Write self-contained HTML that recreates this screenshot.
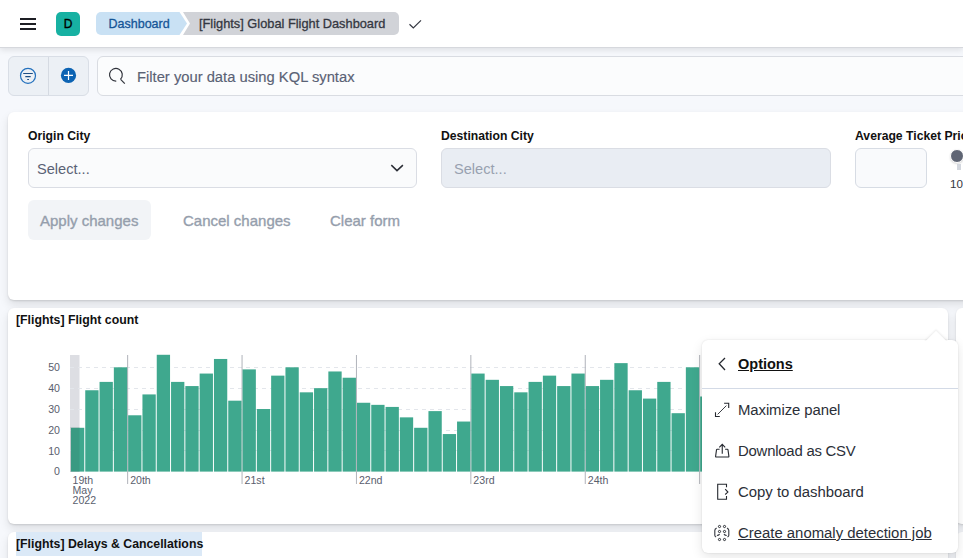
<!DOCTYPE html>
<html><head><meta charset="utf-8">
<style>
*{box-sizing:border-box;margin:0;padding:0}
html,body{width:963px;height:558px;overflow:hidden;background:#f6f8fc;font-family:"Liberation Sans",sans-serif;color:#1d2a3e}
.abs{position:absolute}
#hdr{position:absolute;left:0;top:0;width:963px;height:48px;background:#fff;border-bottom:1px solid #d6d8dd;box-shadow:0 2px 6px rgba(0,0,0,.1)}
.ham{position:absolute;left:20px;width:16px;height:2px;background:#1d1e24}
#avatar{position:absolute;left:56px;top:12px;width:24px;height:24px;border-radius:5px;background:#17b1a2;color:#000;font-size:12px;line-height:24px;text-align:center;-webkit-text-stroke:.35px #000}
.bc{position:absolute;top:12px;height:23px;font-size:12.5px;line-height:24px;white-space:nowrap}
#bc1{left:96px;width:91px;color:#155597;background:#c9e1f4;clip-path:polygon(0 0,83.5px 0,91px 50%,83.5px 100%,0 100%);border-radius:5px 0 0 5px;padding-left:12.5px;-webkit-text-stroke:.3px #155597}
#bc2{left:183px;width:216px;color:#343741;background:#d1d3d8;clip-path:polygon(0 0,100% 0,100% 100%,0 100%,7px 50%);border-radius:0 5px 5px 0;padding-left:16px;font-size:12.8px;-webkit-text-stroke:.3px #343741}
.panel{position:absolute;background:#fff;border-radius:6px;box-shadow:0 1px 2px rgba(0,0,0,.12),0 5px 10px rgba(0,0,0,.1)}
.lbl{position:absolute;font-size:12.2px;font-weight:bold;color:#111;white-space:nowrap}
.sel{position:absolute;height:40px;border:1px solid #dadde4;border-radius:6px;background:#fafbfc;font-size:14.6px;color:#5a6275;line-height:40px;padding-left:8px}
.btxt{position:absolute;font-size:15px;color:#959eac;white-space:nowrap;-webkit-text-stroke:.35px #959eac}
.mi{position:absolute;left:738px;font-size:14.9px;color:#2b2f38;white-space:nowrap}
.axl{font-family:"Liberation Sans",sans-serif;font-size:10.6px;fill:#5a606e}
svg.ic path,svg.ic circle{vector-effect:none}
</style></head><body>
<div id="hdr">
  <div class="ham" style="top:18px"></div>
  <div class="ham" style="top:23px"></div>
  <div class="ham" style="top:28px"></div>
  <div id="avatar">D</div>
  <div class="bc" id="bc1">Dashboard</div>
  <div class="bc" id="bc2">[Flights] Global Flight Dashboard</div>
  <svg class="abs" style="left:406px;top:16px" width="18" height="16" viewBox="0 0 18 16"><path d="M3.5 8.3 L7.3 12 L15 4.3" fill="none" stroke="#343741" stroke-width="1.2"/></svg>
</div>

<!-- filter bar -->
<div class="abs" style="left:8px;top:56px;width:81px;height:40px;background:#ecf0f5;border:1px solid #d9dee6;border-radius:6px"></div>
<div class="abs" style="left:48px;top:57px;width:1px;height:38px;background:#d5dae2"></div>
<svg class="abs" style="left:14px;top:61px" width="30" height="30" viewBox="0 0 30 30"><circle cx="14" cy="14.8" r="7.5" fill="none" stroke="#2471bd" stroke-width="1.2"/><path d="M9.2 12.5h9.6M11.3 15.6h5.4M13.2 18.5h1.8" stroke="#1f4f85" stroke-width="1.2"/></svg>
<svg class="abs" style="left:54px;top:61px" width="30" height="30" viewBox="0 0 30 30"><circle cx="14.5" cy="14.4" r="7.6" fill="#0c63b3"/><path d="M14.5 9.9v9M10 14.4h9" stroke="#fff" stroke-width="1.2"/></svg>
<div class="abs" style="left:97px;top:56px;width:880px;height:40px;background:#fbfcfd;border:1px solid #d9dce2;border-radius:6px"></div>
<svg class="abs" style="left:102px;top:61px" width="30" height="30" viewBox="0 0 30 30"><path d="M14.24 20.19A6.4 6.4 0 1 1 18.5 18.25" fill="none" stroke="#30333b" stroke-width="1.2"/><path d="M18.6 18.4L22.8 22.6" stroke="#30333b" stroke-width="1.2"/></svg>
<div class="abs" style="left:137px;top:68.5px;font-size:14.75px;color:#5a6275;white-space:nowrap;-webkit-text-stroke:.15px #5a6275">Filter your data using KQL syntax</div>

<!-- controls panel -->
<div class="panel" style="left:8px;top:112px;width:990px;height:188px"></div>
<div class="lbl" style="left:28px;top:129px">Origin City</div>
<div class="sel" style="left:28px;top:148px;width:389px">Select...</div>
<svg class="abs" style="left:388px;top:160px" width="18" height="16" viewBox="0 0 18 16"><path d="M3.3 5.1L9 10.6 14.9 5.1" fill="none" stroke="#2b2e36" stroke-width="1.5"/></svg>
<div class="lbl" style="left:441px;top:129px">Destination City</div>
<div class="sel" style="left:441px;top:148px;width:390px;background:#e9edf3;color:#98a1b0;padding-left:12px">Select...</div>
<div class="lbl" style="left:855px;top:129px">Average Ticket Price</div>
<div class="abs" style="left:855px;top:148px;width:72px;height:40px;border:1px solid #d7dce4;border-radius:6px;background:#f9fafc"></div>
<div class="abs" style="left:950px;top:149px;width:14px;height:14px;border-radius:50%;background:#5f6574;border:1px solid #fff;box-shadow:0 1px 2px rgba(0,0,0,.15)"></div>
<div class="abs" style="left:957px;top:164px;width:4px;height:6px;background:#d3d7de"></div>
<div class="abs" style="left:950px;top:176.5px;font-size:11.6px;color:#343741">10</div>
<div class="abs" style="left:28px;top:200px;width:123px;height:40px;background:#f2f4f7;border-radius:6px"></div>
<div class="btxt" style="left:40px;top:211.5px">Apply changes</div>
<div class="btxt" style="left:183px;top:211.5px">Cancel changes</div>
<div class="btxt" style="left:330px;top:211.5px">Clear form</div>

<!-- flight count panel -->
<div class="panel" style="left:8px;top:308px;width:940px;height:216px"></div>
<div class="panel" style="left:956px;top:308px;width:40px;height:216px"></div>
<div class="lbl" style="left:16px;top:313px;font-size:12.3px">[Flights] Flight count</div>
<svg class="abs" style="left:0;top:0" width="963" height="558">
  <rect x="70" y="355" width="9.5" height="117" fill="#dddee3"/>
  <g stroke="#e3e6eb" stroke-width="1" stroke-dasharray="4 4">
    <line x1="70" y1="367.5" x2="948" y2="367.5"/>
    <line x1="70" y1="388.5" x2="948" y2="388.5"/>
    <line x1="70" y1="409.5" x2="948" y2="409.5"/>
    <line x1="70" y1="430.5" x2="948" y2="430.5"/>
    <line x1="70" y1="450.5" x2="948" y2="450.5"/>
  </g>
  <g stroke="#b0b3ba" stroke-width="1">
    <line x1="127.65" y1="355" x2="127.65" y2="484"/>
    <line x1="242.05" y1="355" x2="242.05" y2="484"/>
    <line x1="356.45" y1="355" x2="356.45" y2="484"/>
    <line x1="470.85" y1="355" x2="470.85" y2="484"/>
    <line x1="585.25" y1="355" x2="585.25" y2="484"/>
    <line x1="699.65" y1="355" x2="699.65" y2="484"/>
  </g>
  <g fill="#3fa88e">
<rect x="70.95" y="427.79" width="13.30" height="43.81"/>
<rect x="85.25" y="390.25" width="13.30" height="81.35"/>
<rect x="99.55" y="381.90" width="13.30" height="89.70"/>
<rect x="113.85" y="367.30" width="13.30" height="104.30"/>
<rect x="128.15" y="415.28" width="13.30" height="56.32"/>
<rect x="142.45" y="394.42" width="13.30" height="77.18"/>
<rect x="156.75" y="354.78" width="13.30" height="116.82"/>
<rect x="171.05" y="381.90" width="13.30" height="89.70"/>
<rect x="185.35" y="386.07" width="13.30" height="85.53"/>
<rect x="199.65" y="373.56" width="13.30" height="98.04"/>
<rect x="213.95" y="358.96" width="13.30" height="112.64"/>
<rect x="228.25" y="400.68" width="13.30" height="70.92"/>
<rect x="242.55" y="369.39" width="13.30" height="102.21"/>
<rect x="256.85" y="409.02" width="13.30" height="62.58"/>
<rect x="271.15" y="375.64" width="13.30" height="95.96"/>
<rect x="285.45" y="367.30" width="13.30" height="104.30"/>
<rect x="299.75" y="392.33" width="13.30" height="79.27"/>
<rect x="314.05" y="388.16" width="13.30" height="83.44"/>
<rect x="328.35" y="371.47" width="13.30" height="100.13"/>
<rect x="342.65" y="377.73" width="13.30" height="93.87"/>
<rect x="356.95" y="402.76" width="13.30" height="68.84"/>
<rect x="371.25" y="404.85" width="13.30" height="66.75"/>
<rect x="385.55" y="406.93" width="13.30" height="64.67"/>
<rect x="399.85" y="417.36" width="13.30" height="54.24"/>
<rect x="414.15" y="427.79" width="13.30" height="43.81"/>
<rect x="428.45" y="411.11" width="13.30" height="60.49"/>
<rect x="442.75" y="434.05" width="13.30" height="37.55"/>
<rect x="457.05" y="421.54" width="13.30" height="50.06"/>
<rect x="471.35" y="373.56" width="13.30" height="98.04"/>
<rect x="485.65" y="379.82" width="13.30" height="91.78"/>
<rect x="499.95" y="386.07" width="13.30" height="85.53"/>
<rect x="514.25" y="392.33" width="13.30" height="79.27"/>
<rect x="528.55" y="381.90" width="13.30" height="89.70"/>
<rect x="542.85" y="375.64" width="13.30" height="95.96"/>
<rect x="557.15" y="386.07" width="13.30" height="85.53"/>
<rect x="571.45" y="373.56" width="13.30" height="98.04"/>
<rect x="585.75" y="386.07" width="13.30" height="85.53"/>
<rect x="600.05" y="379.82" width="13.30" height="91.78"/>
<rect x="614.35" y="363.13" width="13.30" height="108.47"/>
<rect x="628.65" y="390.25" width="13.30" height="81.35"/>
<rect x="642.95" y="398.59" width="13.30" height="73.01"/>
<rect x="657.25" y="381.90" width="13.30" height="89.70"/>
<rect x="671.55" y="413.19" width="13.30" height="58.41"/>
<rect x="685.85" y="367.30" width="13.30" height="104.30"/>
<rect x="700.15" y="396.50" width="13.30" height="75.10"/>
<rect x="714.45" y="388.16" width="13.30" height="83.44"/>
<rect x="728.75" y="377.73" width="13.30" height="93.87"/>
<rect x="743.05" y="392.33" width="13.30" height="79.27"/>
<rect x="757.35" y="383.99" width="13.30" height="87.61"/>
<rect x="771.65" y="379.82" width="13.30" height="91.78"/>
<rect x="785.95" y="388.16" width="13.30" height="83.44"/>
<rect x="800.25" y="375.64" width="13.30" height="95.96"/>
  </g>
  <rect x="70" y="427" width="9.5" height="45" fill="#000" opacity="0.08"/>
  <g class="axl" text-anchor="end">
    <text x="60" y="371">50</text>
    <text x="60" y="392">40</text>
    <text x="60" y="413">30</text>
    <text x="60" y="433.5">20</text>
    <text x="60" y="454.5">10</text>
    <text x="60" y="475">0</text>
  </g>
  <g class="axl">
    <text x="72.5" y="484">19th</text>
    <text x="72.5" y="494">May</text>
    <text x="72.5" y="504">2022</text>
    <text x="130.15" y="484">20th</text>
    <text x="244.55" y="484">21st</text>
    <text x="358.95" y="484">22nd</text>
    <text x="473.35" y="484">23rd</text>
    <text x="587.75" y="484">24th</text>
  </g>
</svg>

<!-- delays panel -->
<div class="panel" style="left:8px;top:532px;width:940px;height:60px"></div>
<div class="panel" style="left:956px;top:532px;width:40px;height:60px"></div>
<div class="abs" style="left:16px;top:532px;width:186px;height:24px;background:#dbe9f7"></div>
<div class="lbl" style="left:16px;top:537px;font-size:12.3px">[Flights] Delays &amp; Cancellations</div>

<!-- popover -->
<div class="abs" style="left:702px;top:340px;width:256px;height:213px;background:#fff;border-radius:6px;box-shadow:0 0 2px rgba(0,0,0,.12),0 4px 12px rgba(0,0,0,.1)"></div>
<div class="abs" style="left:928px;top:333.8px;width:16px;height:16px;background:#fff;transform:rotate(45deg);box-shadow:-1px -1px 2px rgba(0,0,0,.07)"></div>
<div class="abs" style="left:702px;top:341px;width:256px;height:20px;background:#fff;border-radius:6px 6px 0 0"></div>
<svg class="abs" style="left:708px;top:350px" width="30" height="30" viewBox="0 0 30 30"><path d="M17 8L11.2 13.8 17 20" fill="none" stroke="#25282f" stroke-width="1.3"/></svg>
<div class="abs" style="left:738px;top:356px;font-size:14.5px;font-weight:bold;color:#111;text-decoration:underline">Options</div>
<div class="abs" style="left:702px;top:388px;width:256px;height:1px;background:#d3dae6"></div>
<svg class="abs" style="left:708px;top:395px" width="30" height="30" viewBox="0 0 30 30"><path d="M16.1 8.3h4.6v4.6M7.5 17.2v4.3h4.3" fill="none" stroke="#25282f" stroke-width="1.1"/><path d="M18.4 10.6L9.6 19.4" fill="none" stroke="#25282f" stroke-width="0.9"/></svg>
<div class="mi" style="top:402px;letter-spacing:-0.08px">Maximize panel</div>
<svg class="abs" style="left:708px;top:436px" width="30" height="30" viewBox="0 0 30 30"><path d="M14.25 17.7V8.3M11.3 11.3l2.95-3 2.95 3" fill="none" stroke="#25282f" stroke-width="1.1"/><path d="M11.6 13.2H9.2Q8.6 13.2 8.5 13.8L7.6 20.3Q7.5 21 8.2 21H20.3Q21 21 20.9 20.3L20 13.8Q19.9 13.2 19.3 13.2H17.1" fill="none" stroke="#25282f" stroke-width="1.1"/></svg>
<div class="mi" style="top:443px;letter-spacing:-0.22px">Download as CSV</div>
<svg class="abs" style="left:708px;top:477px" width="30" height="30" viewBox="0 0 30 30"><path d="M18.5 10.2V7.3H9.7V22.3H18.5V19.1M17.2 12.1l2.7 2.95-2.7 2.45" fill="none" stroke="#25282f" stroke-width="1.1"/></svg>
<div class="mi" style="top:484px">Copy to dashboard</div>
<svg class="abs" style="left:708px;top:518px" width="30" height="30" viewBox="0 0 30 30"><g fill="none" stroke="#25282f" stroke-width="1"><circle cx="11.5" cy="8.5" r="1.1"/><circle cx="16.5" cy="8.5" r="1.1"/><circle cx="11.5" cy="13.5" r="1.1"/><circle cx="16.5" cy="13.5" r="1.1"/><circle cx="11.5" cy="21.5" r="1.1"/><circle cx="16.5" cy="21.5" r="1.1"/></g><path d="M8.6 10Q6.8 11 6.8 12.6v4.6q0 1.2 1.3 1.9M11.6 16.1q-.9 1.3-2.7 1.4M19 10Q20.8 11 20.8 12.6v4.6q0 1.2-1.3 1.9M16 16.1q.9 1.3 2.7 1.4" fill="none" stroke="#3a3d45" stroke-width="1.15"/></svg>
<div class="mi" style="top:525px;text-decoration:underline">Create anomaly detection job</div>
</body></html>
